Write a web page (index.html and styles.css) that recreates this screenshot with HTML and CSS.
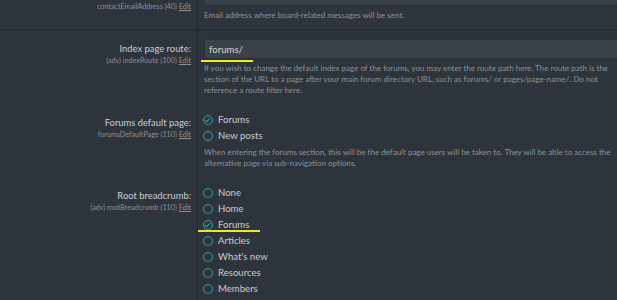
FILE: index.html
```html
<!DOCTYPE html>
<html lang="en">
<head>
<meta charset="UTF-8" />
<title>Options: Basic board information</title>
<link rel="stylesheet" href="styles.css">
</head>
<body>

<div class="form">
  <div class="row row-sep">
    <div class="label">
      <div class="hint-key">contactEmailAddress (40) <a href="#">Edit</a></div>
    </div>
    <div class="field">
      <input class="input" type="text" value="" />
      <p class="explain">Email address where board-related messages will be sent.</p>
    </div>
  </div>

  <div class="row">
    <div class="label">
      <div class="title">Index page route:</div>
      <div class="hint-key">(adv) indexRoute (100) <a href="#">Edit</a></div>
    </div>
    <div class="field">
      <div class="mark-wrap">
        <input class="input" type="text" value="forums/" />
        <span class="mark mark-input"></span>
      </div>
      <p class="explain">If you wish to change the default index page of the forums, you may enter the route path here. The route path is the section of the URL to a page after your main forum directory URL, such as forums/ or pages/page-name/. Do not reference a route filter here.</p>
    </div>
  </div>

  <div class="row">
    <div class="label">
      <div class="title">Forums default page:</div>
      <div class="hint-key">forumsDefaultPage (110) <a href="#">Edit</a></div>
    </div>
    <div class="field">
      <ul class="choices">
        <li class="checked"><span class="radio"></span>Forums</li>
        <li><span class="radio"></span>New posts</li>
      </ul>
      <p class="explain">When entering the forums section, this will be the default page users will be taken to. They will be able to access the alternative page via sub-navigation options.</p>
    </div>
  </div>

  <div class="row">
    <div class="label">
      <div class="title">Root breadcrumb:</div>
      <div class="hint-key">(adv) rootBreadcrumb (110) <a href="#">Edit</a></div>
    </div>
    <div class="field">
      <ul class="choices">
        <li><span class="radio"></span>None</li>
        <li><span class="radio"></span>Home</li>
        <li class="checked mark-wrap"><span class="radio"></span>Forums<span class="mark mark-radio"></span></li>
        <li><span class="radio"></span>Articles</li>
        <li><span class="radio"></span>What's new</li>
        <li><span class="radio"></span>Resources</li>
        <li><span class="radio"></span>Members</li>
      </ul>
    </div>
  </div>
</div>

</body>
</html>
```

FILE: styles.css
```css
body {
  margin: 0;
  background: #2e343c;
  font-family: Lato, "Noto Sans", sans-serif;
  color: #c9cdd2;
  overflow: hidden;
}
.form {
  margin-top: -23px;
}
.row {
  display: grid;
  grid-template-columns: 198px 1fr;
}
.row-sep {
  border-bottom: 1px solid #22272d;
}
.label {
  border-right: 1px solid #22272d;
  text-align: right;
  padding: 9px 6px 8px 0;
}
.field {
  padding: 9px 0 8px 6px;
}
.title {
  font-size: 9.4px;
  line-height: 20px;
}
.hint-key {
  font-size: 7.2px;
  line-height: 4px;
  color: #8b9198;
}
.row-sep .hint-key {
  margin-top: 19px;
}
.hint-key a {
  color: #8b9198;
}
.input {
  display: block;
  box-sizing: border-box;
  width: 100%;
  height: 20px;
  margin: 0;
  padding: 0 4px;
  background: #3b4149;
  border: 1px solid #2a2f36;
  border-right: none;
  color: #d4d7db;
  font-family: inherit;
  font-size: 9.6px;
}
.explain {
  margin: 4px 0 0;
  font-size: 8px;
  line-height: 11px;
  color: #8d939a;
  padding-right: 6px;
}
.choices {
  list-style: none;
  margin: -1px 0 0;
  padding: 0;
}
.choices li {
  display: flex;
  align-items: center;
  font-size: 9.6px;
  line-height: 16px;
}
.radio {
  box-sizing: border-box;
  width: 10px;
  height: 10px;
  margin: 0 5px 0 -1px;
  border: 1.5px solid #33a3a3;
  border-radius: 50%;
  position: relative;
}
.checked .radio::after {
  content: "";
  position: absolute;
  left: 2px;
  top: 1px;
  width: 2px;
  height: 4px;
  border: solid #33a3a3;
  border-width: 0 1.2px 1.2px 0;
  transform: rotate(45deg);
}
.choices + .explain {
  margin-top: 3px;
}
.mark-wrap {
  position: relative;
}
.mark {
  position: absolute;
  height: 2px;
  background: #f2ea17;
}
.mark-input {
  left: -3px;
  top: 21px;
  width: 52px;
}
.mark-radio {
  left: -6px;
  top: 13px;
  width: 62px;
}
```
